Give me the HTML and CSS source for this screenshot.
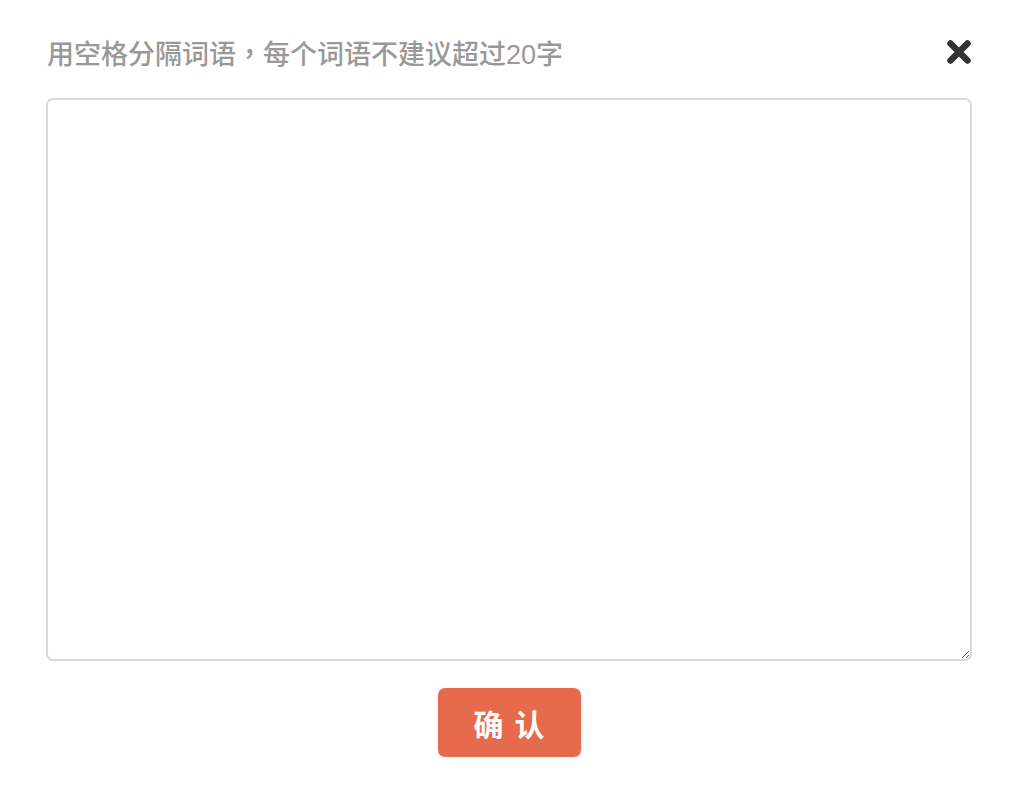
FILE: index.html
```html
<!DOCTYPE html>
<html lang="zh-CN">
  <head>
    <meta charset="UTF-8" />
    <meta name="viewport" content="width=device-width, initial-scale=1.0" />
    <title>添加词语</title>
    <link rel="stylesheet" href="styles.css">
  </head>
  <body>
    <div class="dialog">
      <div class="dialog-header">
        <h3 class="dialog-title">用空格分隔词语<span class="punct" lang="zh-TW">，</span>每个词语不建议超过20字</h3>
        <button class="dialog-close" aria-label="关闭">
          <svg width="26" height="26" viewBox="0 0 26 26">
            <path d="M4.5 4.5 L21.5 21.5 M21.5 4.5 L4.5 21.5" stroke="#333" stroke-width="6.5" stroke-linecap="round" />
          </svg>
        </button>
      </div>
      <textarea class="words-input"></textarea>
      <div class="dialog-footer">
        <button class="btn-confirm">确 认</button>
      </div>
    </div>
  </body>
</html>
```

FILE: styles.css
```css
* {
  margin: 0;
  padding: 0;
  box-sizing: border-box;
}

body {
  font-family: "Liberation Sans", "Noto Sans CJK SC", sans-serif;
  background: #fff;
}

.dialog {
  padding: 32px 48px 0 46px;
}

.dialog-header {
  display: flex;
  justify-content: space-between;
  align-items: center;
  height: 40px;
  margin-bottom: 26px;
}

.dialog-title {
  font-size: 27px;
  font-weight: 500;
  color: #999;
  padding-left: 1px;
}

/* centred full-width comma */
.dialog-title .punct {
  font-family: "Noto Sans CJK TC", sans-serif;
}

.dialog-close {
  background: none;
  border: none;
  cursor: pointer;
  width: 26px;
  height: 26px;
  display: flex;
}

.words-input {
  display: block;
  width: 100%;
  height: 563px;
  border: 2px solid #d9d9d9;
  border-radius: 7px;
  outline: none;
  padding: 10px;
  font-size: 16px;
  resize: both;
}

.dialog-footer {
  display: flex;
  justify-content: center;
  padding-top: 27px;
}

.btn-confirm {
  width: 143px;
  height: 69px;
  background: #e66b4d;
  color: #fff;
  border: none;
  border-radius: 7px;
  font-family: "Noto Sans CJK SC", sans-serif;
  font-size: 30px;
  font-weight: 700;
  letter-spacing: 2px;
  padding-left: 2px;
  box-shadow: 0 3px 4px rgba(0, 0, 0, 0.08);
  cursor: pointer;
}
```
